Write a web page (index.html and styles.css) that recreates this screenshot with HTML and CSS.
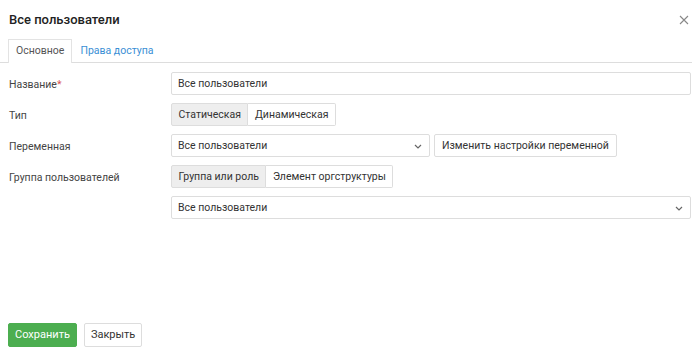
FILE: index.html
```html
<!DOCTYPE html>
<html lang="ru">
<head>
    <meta charset="UTF-8">
    <title>Все пользователи</title>
    <link rel="stylesheet" href="styles.css">
</head>
<body>
    <div class="dialog">
        <div class="dialog-header">
            <span class="dialog-title">Все пользователи</span>
            <span class="close">
                <svg width="10" height="10" viewBox="0 0 10 10"><path d="M1 1L9 9M9 1L1 9" stroke="#888" stroke-width="1.1"/></svg>
            </span>
        </div>

        <div class="tabs">
            <div class="tab active">Основное</div>
            <div class="tab">Права доступа</div>
        </div>

        <div class="form">
            <div class="row">
                <label class="label">Название<span class="req">*</span></label>
                <div class="field">
                    <div class="input wide">Все пользователи</div>
                </div>
            </div>
            <div class="row">
                <label class="label">Тип</label>
                <div class="field">
                    <div class="btn-group">
                        <span class="seg on">Статическая</span><span class="seg">Динамическая</span>
                    </div>
                </div>
            </div>
            <div class="row">
                <label class="label">Переменная</label>
                <div class="field">
                    <div class="input select var-select">Все пользователи
                        <svg class="chev" width="8" height="5" viewBox="0 0 8 5"><path d="M1 1L4 4L7 1" fill="none" stroke="#666" stroke-width="1.2"/></svg>
                    </div>
                    <span class="btn">Изменить настройки переменной</span>
                </div>
            </div>
            <div class="row">
                <label class="label">Группа пользователей</label>
                <div class="field">
                    <div class="btn-group">
                        <span class="seg on">Группа или роль</span><span class="seg">Элемент оргструктуры</span>
                    </div>
                </div>
            </div>
            <div class="row">
                <label class="label"></label>
                <div class="field">
                    <div class="input select wide">Все пользователи
                        <svg class="chev" width="8" height="5" viewBox="0 0 8 5"><path d="M1 1L4 4L7 1" fill="none" stroke="#666" stroke-width="1.2"/></svg>
                    </div>
                </div>
            </div>
        </div>

        <div class="footer">
            <span class="btn save">Сохранить</span>
            <span class="btn">Закрыть</span>
        </div>
    </div>
</body>
</html>
```

FILE: styles.css
```css
body {
    margin: 0;
    font-family: Roboto, "Liberation Sans", sans-serif;
    font-size: 10.5px;
    color: #333;
    background: #fff;
}
.dialog {
    height: 357px;
    display: flex;
    flex-direction: column;
    box-sizing: border-box;
    padding: 0 9px 10px 0;
}
.dialog-header {
    display: flex;
    justify-content: space-between;
    align-items: center;
    height: 39px;
    padding-left: 9px;
}
.dialog-title {
    font-size: 13px;
    font-weight: 500;
    color: #222;
}
.close {
    display: flex;
    margin-right: 2px;
}
.tabs {
    display: flex;
    border-bottom: 1px solid #ddd;
    padding-left: 8px;
    margin-right: -1px;
}
.tab {
    padding: 0 7px;
    height: 22px;
    line-height: 22px;
    color: #3a8fd5;
    border: 1px solid transparent;
    border-bottom: none;
    margin-bottom: -1px;
}
.tab.active {
    color: #555;
    background: #fff;
    border-color: #e3e3e3;
    height: 23px;
}
.form {
    padding-top: 9px;
    flex: 1;
}
.row {
    display: flex;
    align-items: center;
    margin-bottom: 8px;
}
.label {
    width: 162px;
    flex: none;
    padding-left: 9px;
    padding-top: 1px;
    color: #444;
}
.req {
    color: #d9534f;
}
.field {
    flex: 1;
    display: flex;
    gap: 4px;
}
.input {
    height: 23px;
    line-height: 21px;
    box-sizing: border-box;
    border: 1px solid #ddd;
    border-radius: 2px;
    padding: 0 6px;
    color: #333;
}
.wide {
    flex: 1;
}
.select {
    position: relative;
}
.var-select {
    width: 259px;
}
.chev {
    position: absolute;
    right: 7px;
    top: 9px;
}
.btn-group {
    display: flex;
}
.seg {
    height: 23px;
    line-height: 21px;
    box-sizing: border-box;
    border: 1px solid #ddd;
    padding: 0 6.5px;
    background: #fff;
}
.seg:first-child {
    border-radius: 2px 0 0 2px;
}
.seg:last-child {
    border-left: none;
    border-radius: 0 2px 2px 0;
}
.seg.on {
    background: #eee;
}
.btn {
    height: 23px;
    line-height: 21px;
    box-sizing: border-box;
    border: 1px solid #ddd;
    border-radius: 2px;
    padding: 0 7px;
    background: #fff;
    color: #333;
}
.footer {
    display: flex;
    gap: 7px;
    padding-left: 8px;
}
.footer .btn {
    height: 24px;
    line-height: 22px;
    padding: 0 6px;
    font-size: 11px;
}
.footer .save {
    background: #4cae50;
    border-color: #4cae50;
    color: #fff;
}
```
